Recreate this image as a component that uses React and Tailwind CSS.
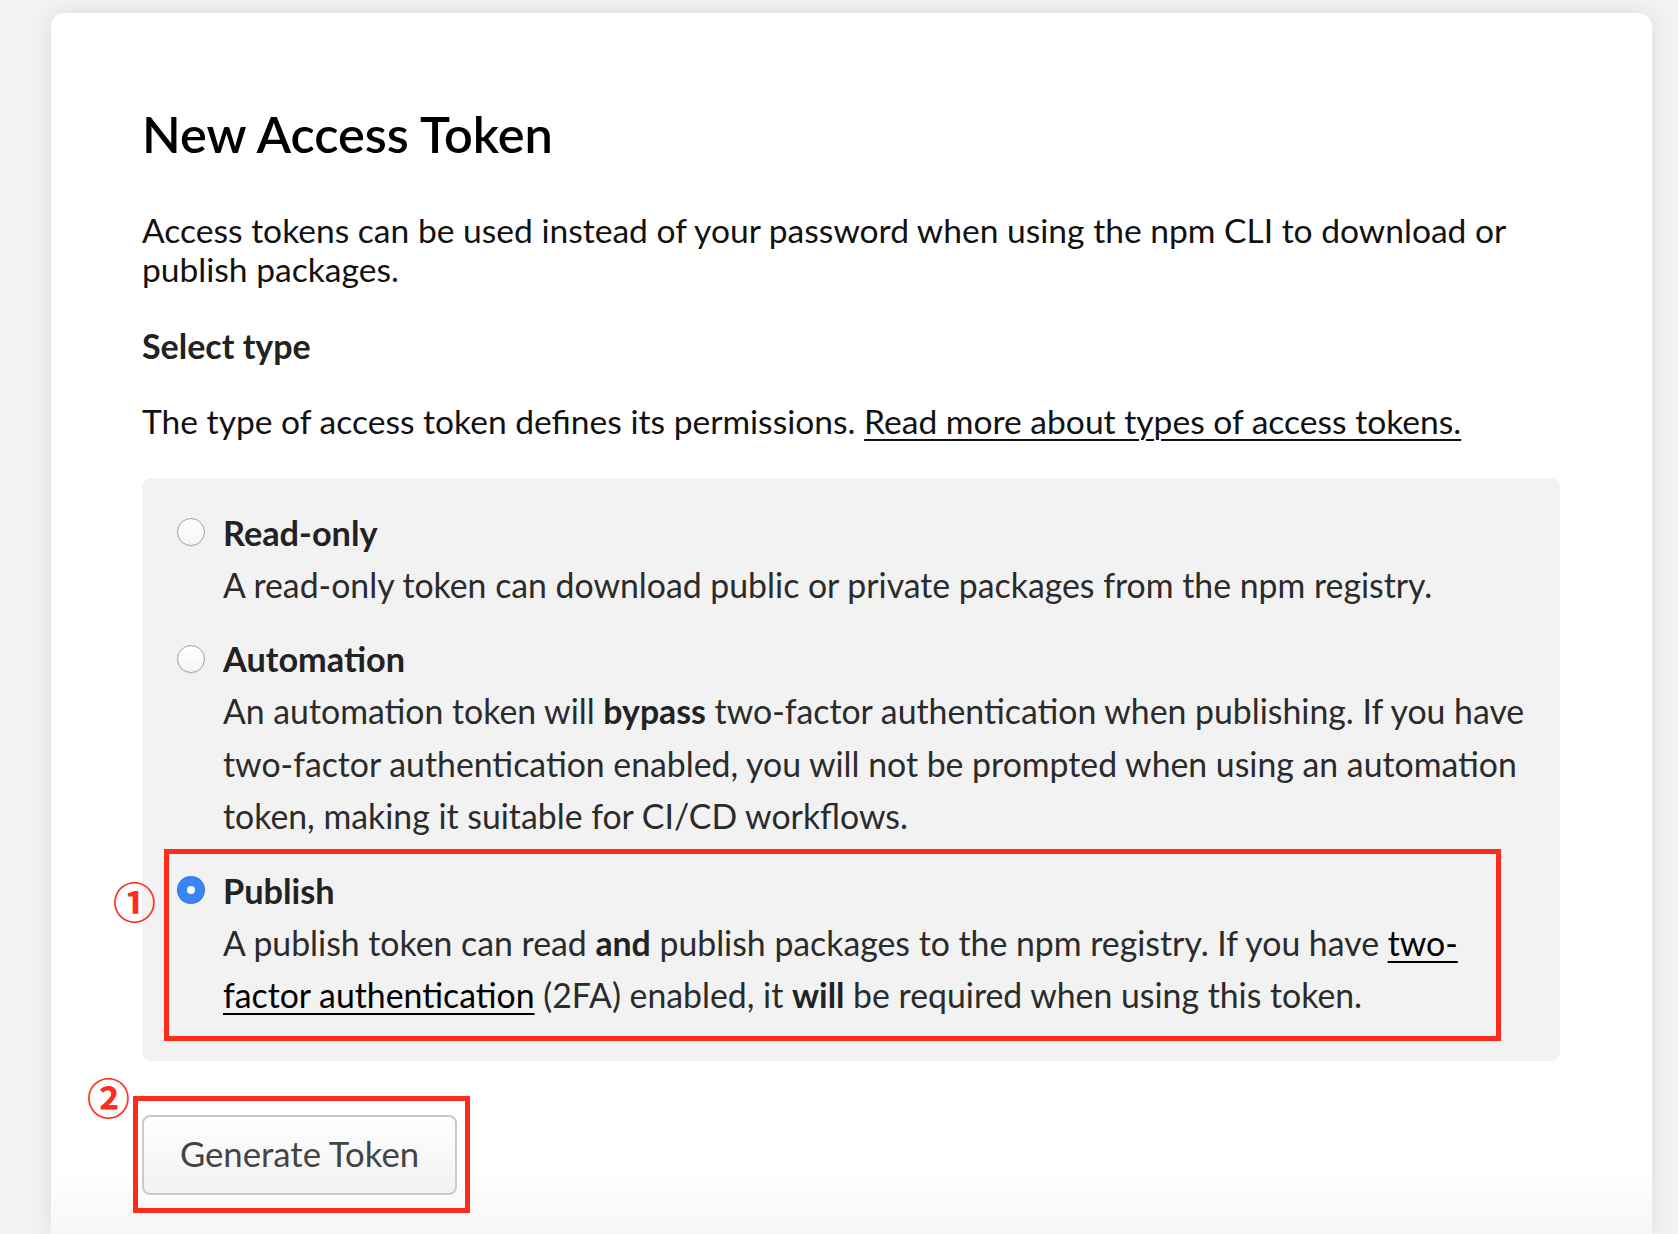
import React from 'react';

const Radio = ({ checked }) => (
  <span
    className={
      checked
        ? 'flex h-7 w-7 shrink-0 items-center justify-center rounded-full bg-[#3b84f6] shadow-[inset_0_0_0_1px_rgba(0,0,0,0.08)]'
        : 'flex h-7 w-7 shrink-0 items-center justify-center rounded-full border border-[#a3a3a3] bg-gradient-to-b from-white to-[#f5f5f5] shadow-[0_1px_1px_rgba(0,0,0,0.06)]'
    }
  >
    {checked && <span className="h-2 w-2 rounded-full bg-white" />}
  </span>
);

const Option = ({ title, checked, children }) => (
  <div>
    <div className="flex h-[52.5px] items-center gap-[18px]">
      <Radio checked={checked} />
      <span className="text-[34.3px] font-bold text-[#222]">{title}</span>
    </div>
    <p className="pl-[46px] text-[33.8px] leading-[52.5px] text-[#2b2b2b]">{children}</p>
  </div>
);

export default function App() {
  return (
    <div className="flex h-[1234px] flex-col overflow-hidden bg-[#f2f2f2] pt-[13px] font-['Lato',sans-serif]">
      <div className="ml-[51px] mr-[26px] flex-1 rounded-t-[14px] bg-linear-to-b from-white from-[95%] to-[#f6f6f6] pl-[91px] pr-[92px] pt-[89px] shadow-[0_0_22px_rgba(0,0,0,0.09)]">
        {/* Header */}
        <h1 className="text-[50.5px] font-semibold leading-[64px] text-black">New Access Token</h1>

        <p className="mt-[45px] text-[33.6px] leading-[39px] text-[#111]">
          Access tokens can be used instead of your password when using the npm CLI to download or
          <br />
          publish packages.
        </p>

        <h2 className="mt-[37px] text-[34px] font-bold leading-[39px] text-[#222]">Select type</h2>

        <p className="mt-[37px] text-[33.6px] leading-[39px] text-[#111]">
          The type of access token defines its permissions.{' '}
          <a href="#" className="underline decoration-2 underline-offset-[5px]">
            Read more about types of access tokens.
          </a>
        </p>

        {/* Token types */}
        <div className="mt-[37px] flex flex-col gap-[21.5px] rounded-[9px] bg-[#f2f2f2] pb-[39px] pl-[35px] pr-[20px] pt-[28px]">
          <Option title="Read-only">
            A read-only token can download public or private packages from the npm registry.
          </Option>

          <Option title="Automation">
            An automation token will <b className="font-bold text-[#222]">bypass</b> two-factor authentication when
            publishing. If you have
            <br />
            two-factor authentication enabled, you will not be prompted when using an automation
            <br />
            token, making it suitable for CI/CD workflows.
          </Option>

          <div className="relative">
            <Option title="Publish" checked>
              A publish token can read <b className="font-bold text-[#222]">and</b> publish packages to the npm
              registry. If you have{' '}
              <a href="#" className="text-black underline decoration-2 underline-offset-[5px]">
                two-
                <br />
                factor authentication
              </a>{' '}
              (2FA) enabled, it <b className="font-bold text-[#222]">will</b> be required when using this token.
            </Option>
            {/* annotation 1 */}
            <div className="pointer-events-none absolute -left-[13px] -top-[15px] h-[192px] w-[1337px] border-[5px] border-[#ff2b1c]" />
            <span className="absolute -left-[64px] top-[15px] font-['Noto_Sans_CJK_JP',sans-serif] text-[43px] font-bold leading-[43px] text-[#ff2b1c]">
              ①
            </span>
          </div>
        </div>

        {/* Action */}
        <div className="relative mt-[54px] w-[315px]">
          <button className="flex h-[80px] w-[315px] items-center justify-center rounded-[8px] border-2 border-[#cacaca] bg-gradient-to-b from-white to-[#f1f1f1] text-[34.7px] text-[#444]">
            Generate Token
          </button>
          <div className="pointer-events-none absolute -left-[9px] -top-[19px] h-[117px] w-[337px] border-[5px] border-[#ff2b1c]" />
          <span className="absolute -left-[55px] -top-[40px] font-['Noto_Sans_CJK_JP',sans-serif] text-[43px] font-bold leading-[43px] text-[#ff2b1c]">
            ②
          </span>
        </div>
      </div>
    </div>
  );
}
